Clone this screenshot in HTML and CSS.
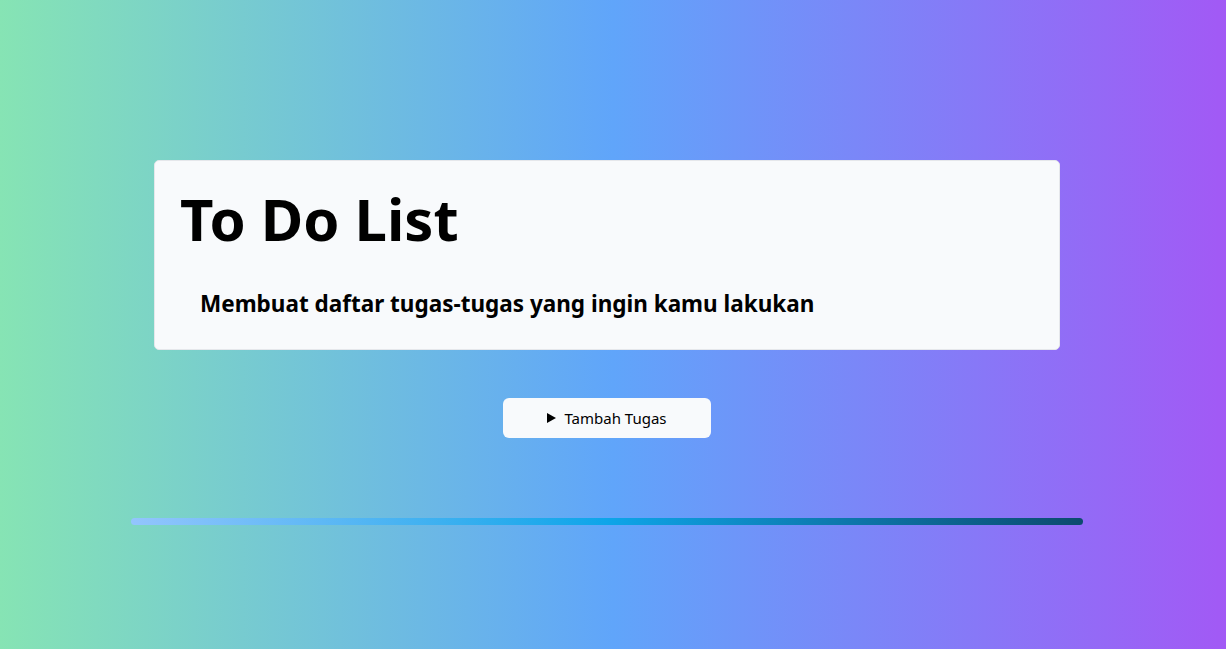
FILE: index.html
```html
<!DOCTYPE html>
<html lang="id">
<head>
<meta charset="utf-8">
<title>To Do List</title>
<link rel="stylesheet" href="styles.css">
</head>
<body>
<main class="page">
  <section class="card">
    <h1 class="title">To Do List</h1>
    <h2 class="subtitle">Membuat daftar tugas-tugas yang ingin kamu lakukan</h2>
  </section>
  <button class="add-btn" type="button">
    <svg class="tri" width="9" height="10" viewBox="0 0 9 10" aria-hidden="true"><path d="M0 0 L9 5 L0 10 Z" fill="#000"/></svg>
    <span>Tambah Tugas</span>
  </button>
  <div class="bar"></div>
</main>
</body>
</html>
```
FILE: styles.css
```css
html, body {
  margin: 0;
  padding: 0;
  height: 100%;
}
body {
  font-family: "Noto Sans", "Open Sans", sans-serif;
  background: linear-gradient(to right, #86e4b4, #60a5fa, #a259f5);
  color: #000;
}
.page {
  display: flex;
  flex-direction: column;
  align-items: center;
  padding: 160px 12px 0 0;
  box-sizing: border-box;
  min-height: 100vh;
}
.card {
  width: 906px;
  height: 190px;
  box-sizing: border-box;
  background: #f8fafc;
  border: 1px solid #e5e7eb;
  border-radius: 5px;
  padding: 20px 25px 0;
}
.title {
  margin: 0;
  font-size: 58px;
  line-height: 76px;
  font-weight: 700;
}
.subtitle {
  margin: 31px 0 0 20px;
  font-size: 22.5px;
  line-height: 32px;
  font-weight: 700;
}
.add-btn {
  margin-top: 48px;
  width: 208px;
  height: 40px;
  border: none;
  border-radius: 6px;
  background: #f8fafc;
  font-family: inherit;
  font-size: 15px;
  color: #000;
  display: flex;
  align-items: center;
  justify-content: center;
  gap: 8px;
  padding: 0;
}
.tri {
  display: block;
}
.bar {
  margin-top: 80px;
  width: 952px;
  height: 7px;
  border-radius: 4px;
  background: linear-gradient(to right, #93c5fd, #0ea5e9, #0c4a6e);
}
```
